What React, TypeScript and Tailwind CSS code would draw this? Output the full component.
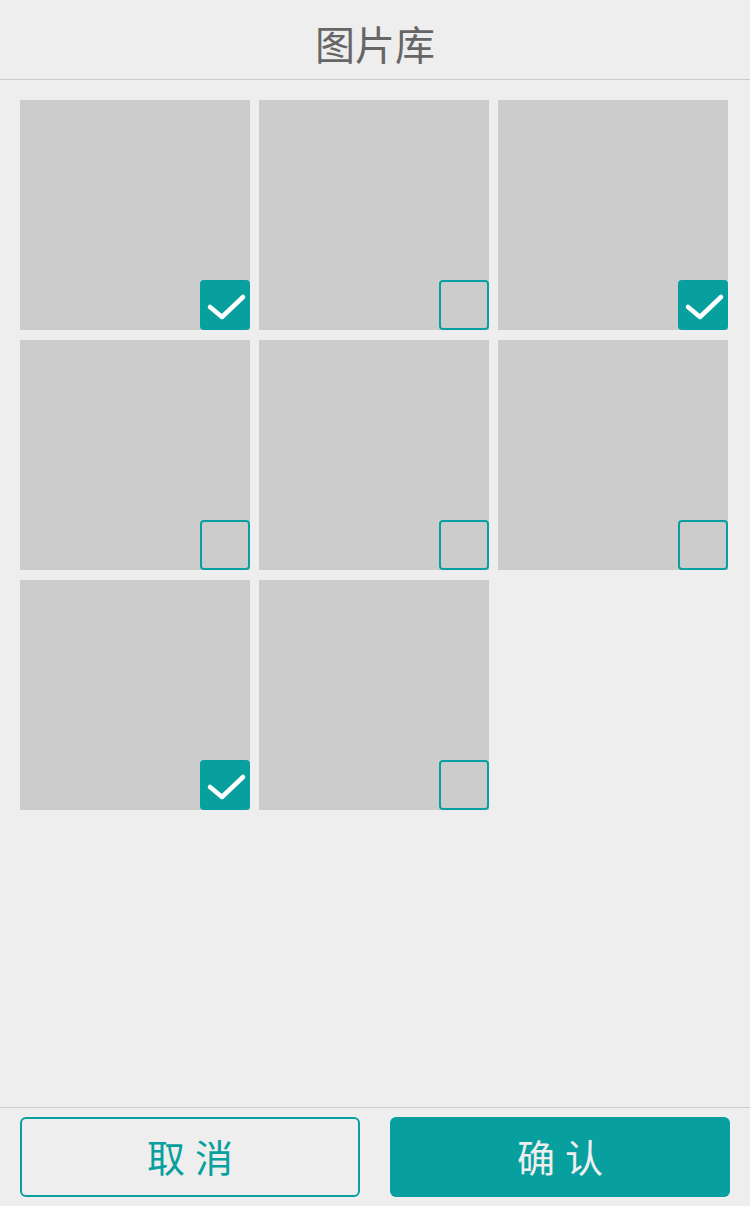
const photos = [
  { id: 1, checked: true },
  { id: 2, checked: false },
  { id: 3, checked: true },
  { id: 4, checked: false },
  { id: 5, checked: false },
  { id: 6, checked: false },
  { id: 7, checked: true },
  { id: 8, checked: false },
]

function CheckBox({ checked }: { checked: boolean }) {
  if (checked) {
    return (
      <div className="w-[50px] h-[50px] rounded-[4px] bg-[#08a09e]">
        <svg width="50" height="50" viewBox="0 0 50 50" fill="none">
          <path d="M10 27 L22 37 L43 17" stroke="#ffffff" strokeWidth="4.5" strokeLinecap="round" strokeLinejoin="round" />
        </svg>
      </div>
    )
  }
  return <div className="w-[50px] h-[50px] rounded-[4px] border-2 border-[#08a09e]" />
}

export default function App() {
  return (
    <div
      className="h-screen flex flex-col bg-[#eeeeee]"
      style={{ fontFamily: '"Noto Sans CJK SC", "Noto Sans", sans-serif' }}
    >
      <header className="h-[80px] shrink-0 flex items-center justify-center border-b border-[#cccccc]">
        <h1 className="text-[40px] leading-none text-[#666666] pt-[6px]">图片库</h1>
      </header>

      <main className="flex-1 px-[20px] pt-[20px]">
        <div className="grid grid-cols-[230px_230px_230px] gap-x-[9px] gap-y-[10px]">
          {photos.map((p) => (
            <div key={p.id} className="h-[230px] bg-[#cccccc] flex items-end justify-end">
              <CheckBox checked={p.checked} />
            </div>
          ))}
        </div>
      </main>

      <footer className="h-[99px] shrink-0 border-t border-[#cccccc] flex items-start justify-between px-[20px] pt-[9px]">
        <button className="w-[340px] h-[80px] rounded-[6px] border-2 border-[#08a09e] text-[#08a09e] text-[38px] tracking-[10px] pl-[10px] pb-[4px]">
          取消
        </button>
        <button className="w-[340px] h-[80px] rounded-[6px] bg-[#08a09e] text-[#eeeeee] text-[38px] tracking-[10px] pl-[10px] pb-[4px]">
          确认
        </button>
      </footer>
    </div>
  )
}
